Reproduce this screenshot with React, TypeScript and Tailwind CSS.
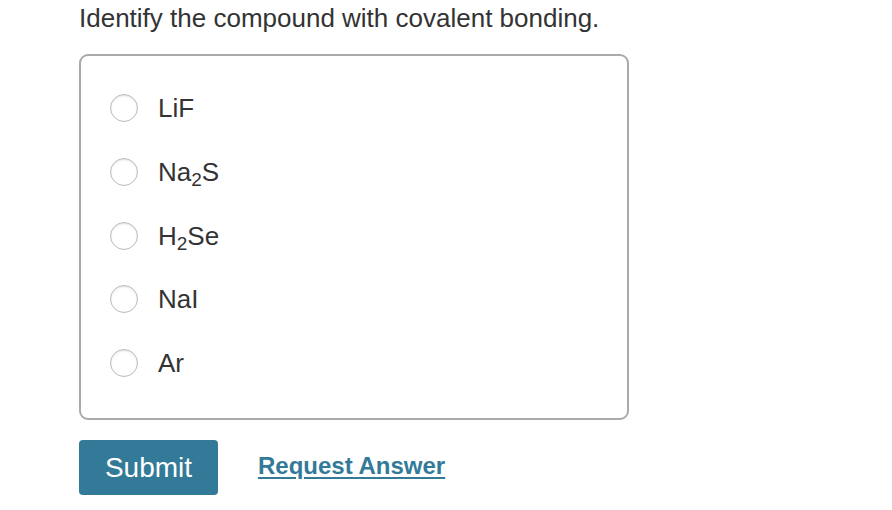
import React from "react";

const sub = "text-[19px] relative top-[5px] align-baseline";

const options: { key: string; label: React.ReactNode }[] = [
  { key: "a", label: <>LiF</> },
  { key: "b", label: <>Na<sub className={sub}>2</sub>S</> },
  { key: "c", label: <>H<sub className={sub}>2</sub>Se</> },
  { key: "d", label: <>NaI</> },
  { key: "e", label: <>Ar</> },
];

export default function App() {
  return (
    <div className="w-[892px] h-[510px] bg-white pl-[79px] pt-[2px] text-[#333]" style={{ fontFamily: '"Liberation Sans", Arial, sans-serif' }}>
      <h1 className="text-[26px] leading-[32px] m-0 font-normal">Identify the compound with covalent bonding.</h1>
      <div className="mt-[20px] w-[550px] h-[366px] border-2 border-[#aaa] rounded-[9px] pl-[29px] pt-[38px]">
        <div className="flex flex-col gap-[35.75px]">
          {options.map((o) => (
            <label key={o.key} className="flex items-center h-[28px]">
              <span className="shrink-0 w-[28px] h-[28px] rounded-full border border-[#bbb] bg-white shadow-[inset_0_1px_2px_rgba(0,0,0,0.12)]"></span>
              <span className="ml-[20px] text-[26px] leading-[28px]">{o.label}</span>
            </label>
          ))}
        </div>
      </div>
      <div className="mt-[20px] flex items-center">
        <button className="w-[139px] h-[55px] bg-[#337a99] rounded-[4px] text-white text-[28px]">Submit</button>
        <a className="ml-[40px] -mt-[4px] text-[24px] font-bold text-[#337a99] underline underline-offset-[3px] decoration-[2px]" href="#">Request Answer</a>
      </div>
    </div>
  );
}
